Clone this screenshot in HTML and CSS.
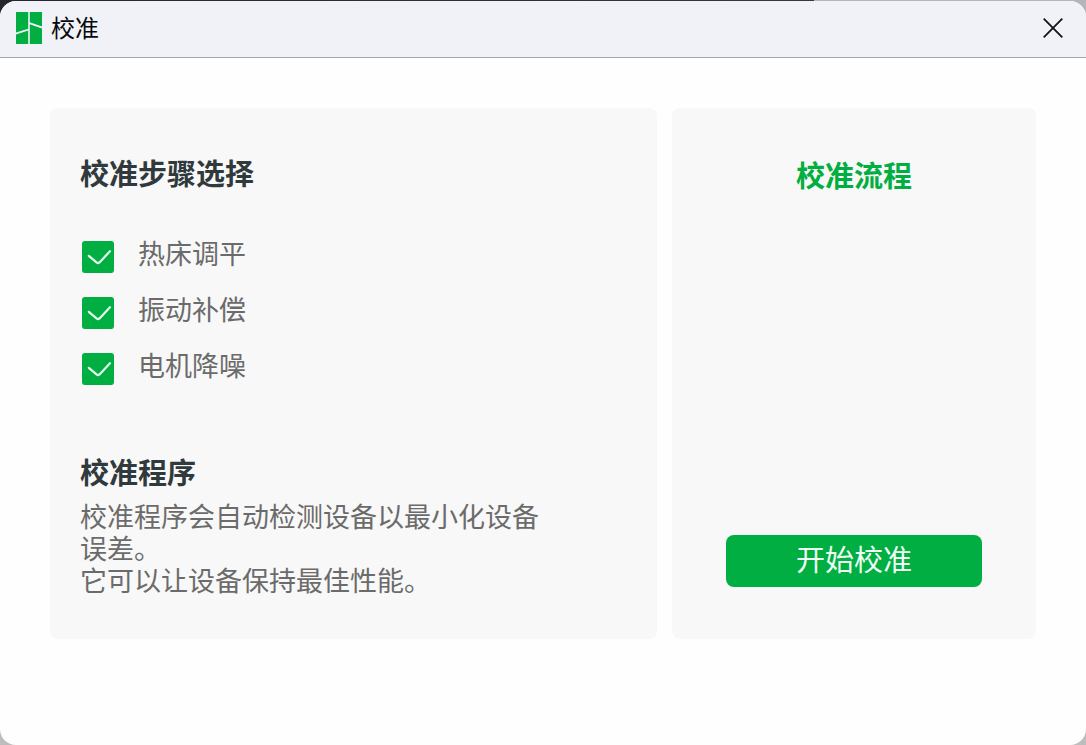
FILE: index.html
```html
<!DOCTYPE html>
<html lang="zh-CN">
<head>
<meta charset="utf-8">
<meta name="viewport" content="width=device-width, initial-scale=1">
<title>校准</title>
<link rel="stylesheet" href="styles.css">
</head>
<body>
<div class="window">
  <header class="titlebar">
    <svg class="logo" viewBox="0 0 26 32" aria-hidden="true">
      <path fill="#00ae42" d="M0 0h12.2v16.7L0 20.6zM0 22.4l12.2-3.9V32H0zM13.8 0H26v14.6l-12.2-4.4zM13.8 12.2L26 16.6V32H13.8z"/>
    </svg>
    <h1 class="title">校准</h1>
    <button class="close" type="button" aria-label="关闭">
      <svg class="close-icon" viewBox="0 0 20 20" aria-hidden="true">
        <path d="M.7.7l18.6 18.6M19.3.7L.7 19.3" fill="none" stroke="#111318" stroke-width="1.8"/>
      </svg>
    </button>
  </header>
  <main class="content">
    <section class="panel panel-steps">
      <h2 class="heading">校准步骤选择</h2>
      <div class="options">
        <div class="option"><input class="check" type="checkbox" id="bed" checked><label class="option-label" for="bed">热床调平</label></div>
        <div class="option"><input class="check" type="checkbox" id="vibration" checked><label class="option-label" for="vibration">振动补偿</label></div>
        <div class="option"><input class="check" type="checkbox" id="motor" checked><label class="option-label" for="motor">电机降噪</label></div>
      </div>
      <h2 class="heading">校准程序</h2>
      <p class="description">校准程序会自动检测设备以最小化设备误差。<br>它可以让设备保持最佳性能。</p>
    </section>
    <section class="panel panel-flow">
      <h2 class="heading heading-flow">校准流程</h2>
      <button class="start" type="button">开始校准</button>
    </section>
  </main>
</div>
</body>
</html>
```
FILE: styles.css
```css
* {
  box-sizing: border-box;
}

body {
  margin: 0;
  padding-top: 1px;
  background: linear-gradient(to right, #26252c 0, #38363f 75%, #b4b4bb 75%) top / 100% 30px no-repeat, #bdbdbd;
  font-family: "Noto Sans CJK SC", sans-serif;
}

h1,
h2,
p {
  margin: 0;
}

.window {
  display: flex;
  flex-direction: column;
  min-height: calc(100vh - 1px);
  overflow: hidden;
  border-radius: 16px;
  background: #fefefe;
}

.titlebar {
  display: flex;
  align-items: center;
  height: 57px;
  padding: 0 16px 2px;
  border-bottom: 1px solid #a5a6aa;
  background: #f0f2f8;
}

.logo {
  width: 26px;
  height: 32px;
}

.title {
  margin-left: 9px;
  padding-bottom: 2px;
  color: #08090b;
  font-size: 24px;
  font-weight: 400;
  line-height: 34px;
}

.close {
  display: flex;
  align-items: center;
  justify-content: center;
  width: 34px;
  height: 34px;
  margin-left: auto;
  padding: 0;
  border: 0;
  background: none;
}

.close-icon {
  width: 20px;
  height: 20px;
}

.content {
  display: grid;
  grid-template-columns: 5fr 3fr;
  gap: 15px;
  padding: 50px;
}

.panel {
  display: flex;
  flex-direction: column;
  border-radius: 8px;
  background: #f8f8f8;
}

.panel-steps {
  padding: 46px 30px 43px;
}

.panel-flow {
  justify-content: space-between;
  padding: 48px 54px 52px;
}

.heading {
  color: #303a3c;
  font-size: 29px;
  font-weight: 700;
  line-height: 36px;
}

.heading-flow {
  color: #00ae42;
  text-align: center;
}

.options {
  display: flex;
  flex-direction: column;
  gap: 20px;
  margin: 47px 0 68px;
}

.option {
  display: flex;
  align-items: flex-start;
  gap: 24px;
  height: 36px;
}

.check {
  appearance: none;
  width: 32px;
  height: 32px;
  margin: 4px 0 0 2px;
  border-radius: 3px;
  background: #00ae42 url("data:image/svg+xml,%3Csvg xmlns='http://www.w3.org/2000/svg' viewBox='0 0 32 32'%3E%3Cpath d='M6.8 14.8l7.7 6.6q1.5 1.2 3 0L28 10.2' fill='none' stroke='%23e4fff0' stroke-width='2.2' stroke-linecap='round' stroke-linejoin='round'/%3E%3C/svg%3E");
}

.check:not(:checked) {
  border: 2px solid #a5a6aa;
  background: #fefefe;
}

.option-label {
  color: #6b6b6b;
  font-size: 27px;
  line-height: 32px;
}

.description {
  max-width: 480px;
  margin-top: 11px;
  color: #6b6b6b;
  font-size: 27px;
  line-height: 32px;
}

.start {
  height: 52px;
  padding: 0 0 6px;
  border: 0;
  border-radius: 8px;
  background: #00ae42;
  color: #f0fff6;
  font-family: inherit;
  font-size: 29px;
  line-height: 36px;
}
```
